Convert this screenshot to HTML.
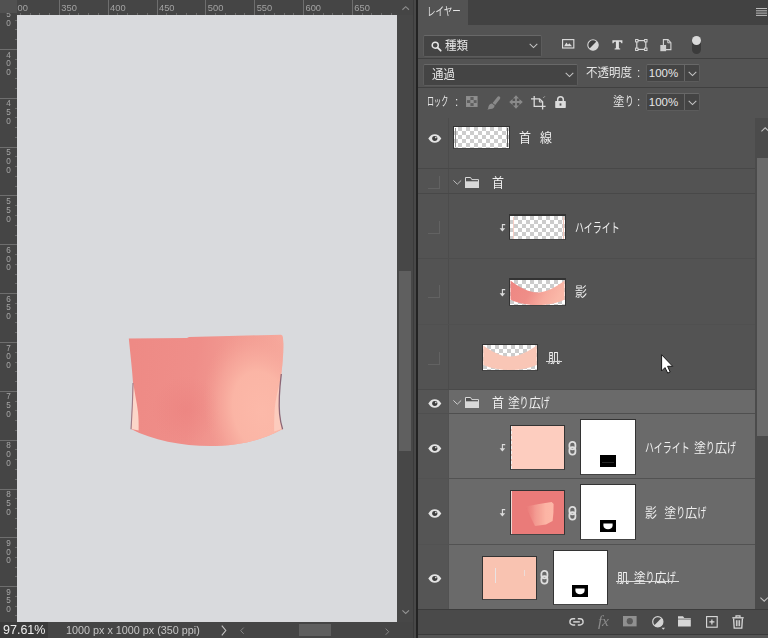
<!DOCTYPE html>
<html lang="ja">
<head>
<meta charset="utf-8">
<title>Photoshop レイヤー</title>
<style>
html,body{margin:0;padding:0;}
body{width:768px;height:638px;overflow:hidden;position:relative;background:#454545;
  font-family:"Liberation Sans","Noto Sans CJK JP",sans-serif;color:#e0e0e0;}
.abs{position:absolute;}
svg{position:absolute;overflow:visible;}
/* ---------- document window ---------- */
#doc{position:absolute;left:0;top:0;width:413px;height:638px;background:#454545;overflow:hidden;}
#canvas{position:absolute;left:17px;top:15px;width:380px;height:607px;background:#d9dadd;}
#corner{position:absolute;left:0;top:0;width:17px;height:13px;background:#515151;}
.hl{position:absolute;top:2.6px;font-size:9.3px;line-height:11px;color:#a2a2a2;white-space:nowrap;}
.vl{position:absolute;left:5px;width:7px;text-align:center;font-size:9.3px;line-height:8.8px;color:#a6a6a6;transform:scaleX(.88);}
.ht{position:absolute;top:0;width:1px;height:15px;background:#6e6e6e;}
.vt{position:absolute;left:0;height:1px;width:17px;background:#6e6e6e;}
.hm{position:absolute;top:13px;width:1px;height:2px;background:#6c6c6c;}
.vm{position:absolute;left:15px;height:1px;width:2px;background:#6c6c6c;}
#rulers,#zoomt,#dims,.gs{will-change:transform;}
#vscroll{position:absolute;left:397px;top:15px;width:16px;height:607px;background:#474747;}
#vthumb{position:absolute;left:399px;top:271px;width:12px;height:180px;background:#5f5f5f;}
#status{position:absolute;left:0;top:622px;width:413px;height:16px;background:#454545;}
#zoomf{position:absolute;left:0;top:0;width:48px;height:16px;background:#3a3a3a;}
#zoomt{position:absolute;left:3px;top:1px;font-size:12.5px;line-height:15px;color:#ececec;}
#dims{position:absolute;left:66px;top:1px;font-size:10.8px;line-height:15px;color:#c6c6c6;white-space:nowrap;}
#hthumb{position:absolute;left:299px;top:2px;width:32px;height:12px;background:#5f5f5f;}
#divider{position:absolute;left:413px;top:0;width:5px;height:638px;background:linear-gradient(90deg,#3b3b3b 0 1.2px,#484848 1.2px 2.9px,#232323 2.9px 5px);}
/* ---------- layers panel ---------- */
#panel{position:absolute;left:418px;top:0;width:350px;height:638px;background:#535353;overflow:hidden;}
/* NOTE: coordinates inside #panel are page coords minus 418 in x */
#tabbar{position:absolute;left:50px;top:0;width:300px;height:25px;background:#424242;}
.jp{position:absolute;white-space:nowrap;font-size:12.5px;line-height:16px;color:#e6e6e6;transform:scaleX(.92);transform-origin:0 0;}
.k{display:inline-block;transform-origin:0 50%;transform:scaleX(var(--s,.75));margin-right:calc(var(--n) * 1em * (var(--s,.75) - 1));}
.ln{font-size:13px;color:#f0f0f0;}
.num{font-size:11.5px;transform:none;}
.sp{display:inline-block;height:1px;}
.hsep{position:absolute;left:0;width:350px;height:1px;background:#404040;}
.row{position:absolute;left:0;width:337px;}
.sel{background:#6a6a6a;}
.sep{position:absolute;left:0;width:337px;height:1px;background:#484848;}
.eyecol{position:absolute;left:0;width:31px;}
.cb{position:absolute;left:10px;width:11px;height:12px;border-right:1px solid #626262;border-bottom:1px solid #626262;}
.thumb{position:absolute;box-sizing:border-box;border:1px solid #333;border-bottom-color:#444;overflow:hidden;}
.chk{background-color:#fff;background-image:linear-gradient(45deg,#ccc 25%,transparent 25%,transparent 75%,#ccc 75%),linear-gradient(45deg,#ccc 25%,transparent 25%,transparent 75%,#ccc 75%);background-size:8px 8px;background-position:0 0,4px 4px;}
.ddbox{position:absolute;box-sizing:border-box;background:#444;border:1px solid #5c5c5c;border-top-color:#686868;border-radius:2px;}
</style>
</head>
<body>
<div id="doc">
  <div id="canvas"></div>
  <svg id="art" style="left:0;top:0" width="413" height="638" viewBox="0 0 413 638">
    <defs>
      <linearGradient id="gskin" gradientUnits="userSpaceOnUse" x1="130" y1="360" x2="285" y2="380">
        <stop offset="0" stop-color="#ee8a85"/>
        <stop offset="0.42" stop-color="#ef8e89"/>
        <stop offset="0.68" stop-color="#f29b92"/>
        <stop offset="1" stop-color="#f7ab9e"/>
      </linearGradient>
      <radialGradient id="glight" gradientUnits="userSpaceOnUse" cx="262" cy="412" r="66" gradientTransform="rotate(-14 262 412) translate(262 412) scale(0.86 1.25) translate(-262 -412)">
        <stop offset="0" stop-color="#fcb9a9" stop-opacity="1"/>
        <stop offset="0.5" stop-color="#fbb6a6" stop-opacity=".95"/>
        <stop offset="0.74" stop-color="#f8ab9e" stop-opacity=".6"/>
        <stop offset="1" stop-color="#f49f94" stop-opacity="0"/>
      </radialGradient>
      <radialGradient id="gdark" gradientUnits="userSpaceOnUse" cx="186" cy="410" r="34">
        <stop offset="0" stop-color="#ea7c7a" stop-opacity="0.42"/>
        <stop offset="1" stop-color="#ea7c7a" stop-opacity="0"/>
      </radialGradient>
      <filter id="soft" x="-5%" y="-5%" width="110%" height="110%"><feGaussianBlur stdDeviation="0.5"/></filter>
    </defs>
    <g filter="url(#soft)">
    <path d="M128.8 338.4L187 338L189 337L281 334.8Q282.7 335 282.9 337L283.5 344C283.4 355 282.4 366 281.3 374C279.6 388 278.6 402 279.6 414C280.2 420 281.2 425 282.6 429C262 441 236 446 210 446C182 446 152 440 131 429C131.6 418 132.4 400 133 383C132.4 372 130.5 355 128.8 338.4Z" fill="url(#gskin)"/>
    <path d="M128.8 338.4L187 338L189 337L281 334.8Q282.7 335 282.9 337L283.5 344C283.4 355 282.4 366 281.3 374C279.6 388 278.6 402 279.6 414C280.2 420 281.2 425 282.6 429C262 441 236 446 210 446C182 446 152 440 131 429C131.6 418 132.4 400 133 383C132.4 372 130.5 355 128.8 338.4Z" fill="url(#gdark)"/>
    <path d="M128.8 338.4L187 338L189 337L281 334.8Q282.7 335 282.9 337L283.5 344C283.4 355 282.4 366 281.3 374C279.6 388 278.6 402 279.6 414C280.2 420 281.2 425 282.6 429C262 441 236 446 210 446C182 446 152 440 131 429C131.6 418 132.4 400 133 383C132.4 372 130.5 355 128.8 338.4Z" fill="url(#glight)"/>
    <!-- left light sliver -->
    <path d="M133.3 383C134.6 393 137 403 138 412C138.6 418 138.8 424 138.6 430.5L131.3 429C132 414 132.8 398 133.3 383Z" fill="#fcd6c9"/>
    <!-- right light sliver -->
    <path d="M280.4 380C278 390 275.2 400 274.6 410C274.2 418 274 425 274.2 431.5L282.4 428.8C280.6 422 279.6 416 279.4 410C279 400 279.6 390 280.4 380Z" fill="#fccbbd"/>
    <!-- dark edge lines -->
    <path d="M133 383C132.8 396 132 414 131 429.3" stroke="#a07c88" stroke-width="1.1" fill="none"/>
    <path d="M281.3 374C279.6 388 278.6 402 279.6 414C280.2 420 281.2 425 282.6 429.2" stroke="#8c6676" stroke-width="1.3" fill="none"/>
    </g>
  </svg>
  <div id="rulers">
<div class="hl" style="left:17.6px">00</div>
<div class="ht" style="left:58.8px"></div>
<div class="hl" style="left:61.3px">350</div>
<div class="ht" style="left:107.6px"></div>
<div class="hl" style="left:110.1px">400</div>
<div class="ht" style="left:156.5px"></div>
<div class="hl" style="left:159.0px">450</div>
<div class="ht" style="left:205.3px"></div>
<div class="hl" style="left:207.8px">500</div>
<div class="ht" style="left:254.2px"></div>
<div class="hl" style="left:256.7px">550</div>
<div class="ht" style="left:303.0px"></div>
<div class="hl" style="left:305.5px">600</div>
<div class="ht" style="left:351.8px"></div>
<div class="hl" style="left:354.3px">650</div>
<div class="hm" style="left:19.7px"></div>
<div class="hm" style="left:29.5px"></div>
<div class="hm" style="left:39.3px"></div>
<div class="hm" style="left:49.0px"></div>
<div class="hm" style="left:68.6px"></div>
<div class="hm" style="left:78.3px"></div>
<div class="hm" style="left:88.1px"></div>
<div class="hm" style="left:97.9px"></div>
<div class="hm" style="left:117.4px"></div>
<div class="hm" style="left:127.2px"></div>
<div class="hm" style="left:136.9px"></div>
<div class="hm" style="left:146.7px"></div>
<div class="hm" style="left:166.2px"></div>
<div class="hm" style="left:176.0px"></div>
<div class="hm" style="left:185.8px"></div>
<div class="hm" style="left:195.6px"></div>
<div class="hm" style="left:215.1px"></div>
<div class="hm" style="left:224.9px"></div>
<div class="hm" style="left:234.6px"></div>
<div class="hm" style="left:244.4px"></div>
<div class="hm" style="left:263.9px"></div>
<div class="hm" style="left:273.7px"></div>
<div class="hm" style="left:283.5px"></div>
<div class="hm" style="left:293.2px"></div>
<div class="hm" style="left:312.8px"></div>
<div class="hm" style="left:322.5px"></div>
<div class="hm" style="left:332.3px"></div>
<div class="hm" style="left:342.1px"></div>
<div class="hm" style="left:361.6px"></div>
<div class="hm" style="left:371.4px"></div>
<div class="hm" style="left:381.1px"></div>
<div class="hm" style="left:390.9px"></div>
<div class="vl" style="top:1.7px">3<br>5<br>0</div>
<div class="vt" style="top:48.9px"></div>
<div class="vl" style="top:50.5px">4<br>0<br>0</div>
<div class="vt" style="top:97.7px"></div>
<div class="vl" style="top:99.3px">4<br>5<br>0</div>
<div class="vt" style="top:146.6px"></div>
<div class="vl" style="top:148.2px">5<br>0<br>0</div>
<div class="vt" style="top:195.4px"></div>
<div class="vl" style="top:197.0px">5<br>5<br>0</div>
<div class="vt" style="top:244.3px"></div>
<div class="vl" style="top:245.9px">6<br>0<br>0</div>
<div class="vt" style="top:293.1px"></div>
<div class="vl" style="top:294.7px">6<br>5<br>0</div>
<div class="vt" style="top:341.9px"></div>
<div class="vl" style="top:343.5px">7<br>0<br>0</div>
<div class="vt" style="top:390.8px"></div>
<div class="vl" style="top:392.4px">7<br>5<br>0</div>
<div class="vt" style="top:439.6px"></div>
<div class="vl" style="top:441.2px">8<br>0<br>0</div>
<div class="vt" style="top:488.5px"></div>
<div class="vl" style="top:490.1px">8<br>5<br>0</div>
<div class="vt" style="top:537.3px"></div>
<div class="vl" style="top:538.9px">9<br>0<br>0</div>
<div class="vt" style="top:586.1px"></div>
<div class="vl" style="top:587.7px">9<br>5<br>0</div>
<div class="vm" style="top:19.6px"></div>
<div class="vm" style="top:29.4px"></div>
<div class="vm" style="top:39.1px"></div>
<div class="vm" style="top:58.7px"></div>
<div class="vm" style="top:68.4px"></div>
<div class="vm" style="top:78.2px"></div>
<div class="vm" style="top:88.0px"></div>
<div class="vm" style="top:107.5px"></div>
<div class="vm" style="top:117.3px"></div>
<div class="vm" style="top:127.0px"></div>
<div class="vm" style="top:136.8px"></div>
<div class="vm" style="top:156.3px"></div>
<div class="vm" style="top:166.1px"></div>
<div class="vm" style="top:175.9px"></div>
<div class="vm" style="top:185.7px"></div>
<div class="vm" style="top:205.2px"></div>
<div class="vm" style="top:215.0px"></div>
<div class="vm" style="top:224.7px"></div>
<div class="vm" style="top:234.5px"></div>
<div class="vm" style="top:254.0px"></div>
<div class="vm" style="top:263.8px"></div>
<div class="vm" style="top:273.6px"></div>
<div class="vm" style="top:283.3px"></div>
<div class="vm" style="top:302.9px"></div>
<div class="vm" style="top:312.6px"></div>
<div class="vm" style="top:322.4px"></div>
<div class="vm" style="top:332.2px"></div>
<div class="vm" style="top:351.7px"></div>
<div class="vm" style="top:361.5px"></div>
<div class="vm" style="top:371.2px"></div>
<div class="vm" style="top:381.0px"></div>
<div class="vm" style="top:400.5px"></div>
<div class="vm" style="top:410.3px"></div>
<div class="vm" style="top:420.1px"></div>
<div class="vm" style="top:429.9px"></div>
<div class="vm" style="top:449.4px"></div>
<div class="vm" style="top:459.2px"></div>
<div class="vm" style="top:468.9px"></div>
<div class="vm" style="top:478.7px"></div>
<div class="vm" style="top:498.2px"></div>
<div class="vm" style="top:508.0px"></div>
<div class="vm" style="top:517.8px"></div>
<div class="vm" style="top:527.5px"></div>
<div class="vm" style="top:547.1px"></div>
<div class="vm" style="top:556.8px"></div>
<div class="vm" style="top:566.6px"></div>
<div class="vm" style="top:576.4px"></div>
<div class="vm" style="top:595.9px"></div>
<div class="vm" style="top:605.7px"></div>
<div class="vm" style="top:615.4px"></div>
  </div>
  <div id="corner"></div>
  <div id="vscroll"></div>
  <div id="vthumb"></div>
  <div id="status">
    <div id="zoomf"></div>
    <div id="zoomt">97.61%</div>
    <div id="dims">1000 px x 1000 px (350 ppi)</div>
    <div id="hthumb"></div>
  </div>
  <svg style="left:402px;top:6.3px" width="7.4" height="4.2" viewBox="0 0 9 5"><path d="M.5 4.5L4.5 .8L8.5 4.5" fill="none" stroke="#8e8e8e" stroke-width="1.3"/></svg>
  <svg style="left:402.3px;top:610px" width="7.4" height="4.2" viewBox="0 0 9 5"><path d="M.5 .5L4.5 4.2L8.5 .5" fill="none" stroke="#959595" stroke-width="1.3"/></svg>
  <svg style="left:221px;top:625px" width="6" height="11" viewBox="0 0 6 11"><path d="M.8 .6L4.8 5.5L.8 10.4" fill="none" stroke="#c4c4c4" stroke-width="1.1"/></svg>
  <svg style="left:240px;top:627.3px" width="4.4" height="7.4" viewBox="0 0 5 8"><path d="M4.2 .5L.8 4L4.2 7.5" fill="none" stroke="#8e8e8e" stroke-width="1"/></svg>
  <svg style="left:385px;top:627.5px" width="4.4" height="7.4" viewBox="0 0 5 8"><path d="M.8 .5L4.2 4L.8 7.5" fill="none" stroke="#8e8e8e" stroke-width="1"/></svg>
</div>
<div id="divider"></div>
<div id="panel">
  <!-- tab strip -->
  <div id="tabbar"></div>
  <div class="jp" id="tabname" style="left:9.3px;top:3.5px;font-size:12px;"><span class="k" style="--n:4;--s:.77">レイヤー</span></div>
  <svg style="left:338px;top:8px" width="11" height="8" viewBox="0 0 11 8"><path d="M0 .5H11M0 2.8H11M0 5.1H11M0 7.4H11" stroke="#bdbdbd" stroke-width="1"/></svg>

  <!-- filter row -->
  <div class="ddbox" style="left:5px;top:35px;width:119px;height:22px;"></div>
  <svg style="left:12.6px;top:40.6px" width="11" height="11" viewBox="0 0 12 12"><circle cx="4.6" cy="4.6" r="3.3" fill="none" stroke="#e6e6e6" stroke-width="1.6"/><path d="M7.2 7.2L10.6 10.6" stroke="#e6e6e6" stroke-width="1.9" stroke-linecap="round"/></svg>
  <div class="jp" style="left:27px;top:38px;">種類</div>
  <svg style="left:111px;top:43px" width="9" height="6" viewBox="0 0 9 6"><path d="M.7 .8L4.5 4.6L8.3 .8" fill="none" stroke="#c4c4c4" stroke-width="1.05"/></svg>

  <div class="hsep" style="top:58px"></div>
  <div class="hsep" style="top:87px"></div>
  <!-- blend row -->
  <div class="ddbox" style="left:5px;top:64px;width:155px;height:22px;"></div>
  <div class="jp" style="left:14px;top:67px;">通過</div>
  <svg style="left:147px;top:72px" width="9" height="6" viewBox="0 0 9 6"><path d="M.7 .8L4.5 4.6L8.3 .8" fill="none" stroke="#c4c4c4" stroke-width="1.05"/></svg>
  <div class="jp" style="left:168px;top:65px;">不透明度</div>
  <div class="jp" style="left:219.3px;top:65px;">:</div>
  <div class="ddbox" style="left:228px;top:64px;width:54px;height:18px;"></div>
  <div class="abs" style="left:266px;top:65px;width:1px;height:16px;background:#666;"></div>
  <div class="jp num" style="left:230.8px;top:65.3px;">100%</div>
  <svg style="left:270px;top:71px" width="9" height="6" viewBox="0 0 9 6"><path d="M.7 .8L4.5 4.6L8.3 .8" fill="none" stroke="#c4c4c4" stroke-width="1.05"/></svg>

  <!-- lock row -->
  <div class="jp" style="left:9px;top:94px;font-size:12px;"><span class="k" style="--n:3;--s:.64">ロック</span></div>
  <div class="jp" style="left:36.5px;top:94px;">:</div>
  <div class="jp" style="left:195px;top:94px;">塗<span class="k" style="--n:1">り</span></div>
  <div class="jp" style="left:219.3px;top:94px;">:</div>
  <div class="ddbox" style="left:228px;top:93px;width:54px;height:18px;"></div>
  <div class="abs" style="left:266px;top:94px;width:1px;height:16px;background:#666;"></div>
  <div class="jp num" style="left:230.8px;top:94.3px;">100%</div>
  <svg style="left:270px;top:100px" width="9" height="6" viewBox="0 0 9 6"><path d="M.7 .8L4.5 4.6L8.3 .8" fill="none" stroke="#c4c4c4" stroke-width="1.05"/></svg>
  <!-- filter icons -->
  <svg style="left:143.7px;top:39.2px" width="12.4" height="9.6" viewBox="0 0 13 10"><rect x=".6" y=".6" width="11.8" height="8.8" fill="none" stroke="#dcdcdc" stroke-width="1.2"/><path d="M2.2 7.6L4.6 3.6L6.3 6L7.6 4.4L10.6 7.6Z" fill="#dcdcdc"/></svg>
  <svg style="left:168.5px;top:38.5px" width="12" height="12" viewBox="0 0 12 12"><circle cx="6" cy="6" r="5.2" fill="#3e3e3e" stroke="#d6d6d6" stroke-width="1.1"/><path d="M9.7 2.3A5.2 5.2 0 0 1 2.3 9.7Z" fill="#d6d6d6"/></svg>
  <svg style="left:194px;top:39.5px" width="11" height="10" viewBox="0 0 11 10"><path d="M.4 .3H10.4V3.3H9.4C9.2 2.2 8.6 1.7 7.4 1.7H6.9V7.6C6.9 8.3 7.3 8.6 8.2 8.6V9.6H2.6V8.6C3.5 8.6 3.9 8.3 3.9 7.6V1.7H3.4C2.2 1.7 1.6 2.2 1.4 3.3H.4Z" fill="#dedede"/></svg>
  <svg style="left:216.5px;top:38.5px" width="13" height="12" viewBox="0 0 13 12"><rect x="1.8" y="1.6" width="9" height="8.8" fill="none" stroke="#d8d8d8" stroke-width="1.2"/><g fill="#535353" stroke="#d8d8d8" stroke-width="1"><rect x=".6" y=".5" width="2.4" height="2.4"/><rect x="9.6" y=".5" width="2.4" height="2.4"/><rect x=".6" y="9.1" width="2.4" height="2.4"/><rect x="9.6" y="9.1" width="2.4" height="2.4"/></g></svg>
  <svg style="left:241.5px;top:38.5px" width="12" height="13" viewBox="0 0 12 13"><path d="M3.4 .6H8L10.9 3.6V10.6H3.4Z" fill="none" stroke="#d4d4d4" stroke-width="1.1"/><path d="M7.8 .8V3.8H10.8" fill="none" stroke="#d4d4d4" stroke-width="1"/><rect x=".3" y="6" width="5.8" height="6.2" fill="#cfcfcf"/></svg>
  <!-- filter toggle -->
  <div class="abs" style="left:273.5px;top:36.5px;width:9.5px;height:17.5px;border-radius:5px;background:#3b3b3b;"></div>
  <div class="abs" style="left:273.5px;top:35.5px;width:9.5px;height:9.5px;border-radius:5px;background:#d9d9d9;"></div>
  <!-- lock icons -->
  <svg style="left:48px;top:96px" width="12" height="11" viewBox="0 0 12 11"><rect x=".5" y=".5" width="10.6" height="10" fill="#5e5e5e" stroke="#8c8c8c" stroke-width="1"/><g fill="#8f8f8f"><rect x="1" y="1" width="3.4" height="3.1"/><rect x="7.6" y="1" width="3.4" height="3.1"/><rect x="4.3" y="4" width="3.4" height="3.1"/><rect x="1" y="7" width="3.4" height="3.1"/><rect x="7.6" y="7" width="3.4" height="3.1"/></g></svg>
  <svg style="left:69px;top:95.5px" width="14" height="14" viewBox="0 0 14 14"><path d="M12.4 .5C13.4 1.1 13.5 2.1 12.9 2.9L8.2 9L5.6 7L10.4 .9C10.9 .2 11.7 .1 12.4 .5Z" fill="#8a8a8a"/><path d="M5 7.5L7.6 9.6C7.6 11.6 6 13 3.6 13.1C2.4 13.2 1.3 13.3 .3 13.8C1.5 12.4 1.1 11.3 1.7 9.9C2.3 8.3 3.7 7.4 5 7.5Z" fill="#8a8a8a"/></svg>
  <svg style="left:90.5px;top:95px" width="14" height="14" viewBox="0 0 14 14"><path d="M7 .2L10 3.6H7.9V6.1H10.4V4L13.8 7L10.4 10V7.9H7.9V10.4H10L7 13.8L4 10.4H6.1V7.9H3.6V10L.2 7L3.6 4V6.1H6.1V3.6H4Z" fill="#8a8a8a"/></svg>
  <svg style="left:113px;top:96px" width="15" height="14" viewBox="0 0 15 14"><path d="M3.2 0V10.4H14.6M0 2.8H8.6L11.6 5.8V13.6" fill="none" stroke="#dadada" stroke-width="1.3"/><path d="M8.4 3V6H11.4" fill="none" stroke="#dadada" stroke-width="1"/><path d="M12.6 1.6L13.6 .6" stroke="#dadada" stroke-width="1"/></svg>
  <svg style="left:136.5px;top:96px" width="11" height="12" viewBox="0 0 11 12"><path d="M2.7 5.4V3.6C2.7 1.9 3.9 .8 5.5 .8C7.1 .8 8.3 1.9 8.3 3.6V5.4" fill="none" stroke="#dcdcdc" stroke-width="1.5"/><rect x=".2" y="5" width="10.6" height="6.9" rx=".6" fill="#dcdcdc"/><rect x="4.6" y="7.4" width="1.8" height="2.2" fill="#535353"/></svg>

  <svg width="0" height="0" style="left:0;top:0"><defs>
    <g id="eyeg"><path d="M.3 5C2 2 4.3 .4 7 .4C9.7 .4 12 2 13.7 5C12 8 9.7 9.6 7 9.6C4.3 9.6 2 8 .3 5Z" fill="#e4e4e4"/><circle cx="7" cy="4.9" r="2.7" fill="#3c3c3c"/><circle cx="8" cy="3.9" r=".9" fill="#d8d8d8"/></g>
    <g id="folderg"><path d="M.5 10.5V.5H5.6L6.8 2.6H13.5V10.5Z" fill="#4f4f4f" stroke="#d9d9d9" stroke-width="1"/><rect x="0" y="4.3" width="14" height="6.7" fill="#d9d9d9"/></g>
    <g id="clipg"><path d="M6.2 .6H3.4V6.6" fill="none" stroke="#dcdcdc" stroke-width="1.1"/><path d="M.6 4.2H6.2L3.4 7.6Z" fill="#dcdcdc"/></g>
    <g id="chaing" fill="none" stroke="#dedede" stroke-width="1.7"><rect x="1.1" y=".9" width="5.8" height="7.2" rx="2.8"/><rect x="1.1" y="5.9" width="5.8" height="7.2" rx="2.8"/></g>
  </defs></svg>
  <!-- ===== layer list (panel x = page x - 418) ===== -->
  <div id="list" class="abs" style="left:0;top:118px;width:337px;height:491px;">
    <!-- selected block background -->
    <div class="abs sel" style="left:31px;top:272px;width:306px;height:219px;"></div>
    <div class="abs" style="left:0;top:272px;width:31px;height:219px;background:#555;"></div>
    <!-- eye column divider -->
    <div class="abs" style="left:30px;top:0;width:1px;height:272px;background:#4c4c4c;"></div>
    <div class="abs" style="left:30px;top:272px;width:1px;height:219px;background:#525252;"></div>
    <!-- row separators (list coords = page y - 118) -->
    <div class="sep" style="top:50px"></div>
    <div class="sep" style="top:75px"></div>
    <div class="sep" style="top:140px;background:#4d4d4d"></div>
    <div class="sep" style="top:206px;background:#505050"></div>
    <div class="sep" style="top:271px;background:#4a4a4a"></div>
    <div class="sep" style="top:295px;background:#4f4f4f"></div>
    <div class="sep" style="top:360px;background:#525252"></div>
    <div class="sep" style="top:426px;background:#525252"></div>
  </div>

  <!-- row 0 : 首 線 -->
  <svg class="eye" style="left:10px;top:133.5px" width="13.6" height="9.2" viewBox="0 0 14 10" preserveAspectRatio="none"><use href="#eyeg"/></svg>
  <div class="thumb chk" style="left:35px;top:126px;width:57px;height:23px;"></div>
  <div class="abs" style="left:37px;top:128px;width:1px;height:19px;background:#8a8a8a;"></div>
  <div class="abs" style="left:89px;top:128px;width:1px;height:19px;background:#5a5a5a;"></div>
  <div class="jp ln" style="left:101.3px;top:129.5px;">首</div>
  <div class="jp ln" style="left:122.3px;top:129.5px;">線</div>

  <!-- row 1 : group 首 -->
  <div class="cb" style="top:176px;"></div>
  <svg style="left:35px;top:180px" width="9" height="5" viewBox="0 0 9 5"><path d="M.4 .4L4.3 4.2L8.2 .4" fill="none" stroke="#bcbcbc" stroke-width="1"/></svg>
  <svg style="left:47px;top:177px" width="14" height="11" viewBox="0 0 14 11"><use href="#folderg"/></svg>
  <div class="jp ln" style="left:73.5px;top:175px;">首</div>

  <!-- row 2 : ハイライト -->
  <div class="cb" style="top:221px;"></div>
  <svg style="left:81.3px;top:224px" width="7" height="8" viewBox="0 0 7 8"><use href="#clipg"/></svg>
  <div class="thumb chk" style="left:91px;top:214px;width:57px;height:26px;border-top-width:2px;"></div>
  <div class="abs" style="left:94.5px;top:217px;width:1px;height:22px;background:#f6cfc6;"></div>
  <div class="abs" style="left:145px;top:217px;width:1px;height:22px;background:#f3c5bb;"></div>
  <div class="jp ln" style="left:157.4px;top:219.5px;"><span class="k" style="--n:5">ハイライト</span></div>

  <!-- row 3 : 影 -->
  <div class="cb" style="top:285px;"></div>
  <svg style="left:81.3px;top:289px" width="7" height="8" viewBox="0 0 7 8"><use href="#clipg"/></svg>
  <div class="thumb chk" style="left:91px;top:278px;width:57px;height:28px;border-top-width:2px;">
    <svg style="left:0;top:0" width="55" height="25" viewBox="0 0 55 25"><defs><linearGradient id="gk" x1="0" y1="0" x2="1" y2=".25"><stop offset="0" stop-color="#ee8682"/><stop offset=".45" stop-color="#ef8e88"/><stop offset=".75" stop-color="#f7ab9e"/><stop offset="1" stop-color="#fab8a8"/></linearGradient></defs><path d="M.5 .5C9 7 19 12.6 27.5 12.6C36 12.6 46 7 54.5 .5V19.5C47 23.5 38 25 27.5 25C17 25 8 23.5 .5 19.5Z" fill="url(#gk)"/></svg>
  </div>
  <div class="jp ln" style="left:157.4px;top:284px;">影</div>

  <!-- row 4 : 肌 -->
  <div class="cb" style="top:351.5px;"></div>
  <div class="thumb chk" style="left:64px;top:344px;width:56px;height:27px;">
    <svg style="left:0;top:0" width="54" height="25" viewBox="0 0 54 25"><path d="M.3 .5C9 6.5 18 11.6 27 11.6C36 11.6 45 6.5 53.7 .5V20C46 23.5 37 25 27 25C17 25 8 23.5 .3 20Z" fill="#f9c6b6"/></svg>
  </div>
  <div class="jp ln" style="left:129.6px;top:349.5px;">肌</div>
  <div class="abs" style="left:128px;top:361px;width:16px;height:1px;background:#d8d8d8;"></div>

  <!-- row 5 : group 首 塗り広げ (selected) -->
  <svg class="eye" style="left:10px;top:398.5px" width="13.6" height="9.2" viewBox="0 0 14 10" preserveAspectRatio="none"><use href="#eyeg"/></svg>
  <svg style="left:35px;top:400px" width="9" height="5" viewBox="0 0 9 5"><path d="M.4 .4L4.3 4.2L8.2 .4" fill="none" stroke="#cfcfcf" stroke-width="1"/></svg>
  <svg style="left:47px;top:397px" width="14" height="11" viewBox="0 0 14 11"><use href="#folderg"/></svg>
  <div class="jp ln" style="left:73.5px;top:394.5px;">首<span class="sp" style="width:4.35px"></span>塗<span class="k" style="--n:1">り</span>広<span class="k" style="--n:1">げ</span></div>

  <!-- row 6 : ハイライト 塗り広げ -->
  <svg class="eye" style="left:10px;top:443.5px" width="13.6" height="9.2" viewBox="0 0 14 10" preserveAspectRatio="none"><use href="#eyeg"/></svg>
  <svg style="left:81.3px;top:444px" width="7" height="8" viewBox="0 0 7 8"><use href="#clipg"/></svg>
  <div class="thumb" style="left:91.5px;top:425px;width:55px;height:45px;background:#fdcdbf;"></div>
  <div class="abs" style="left:92.5px;top:426px;width:1px;height:43px;background:repeating-linear-gradient(#f2f2f2 0 3px,#e9c4b9 3px 5px);"></div>
  <svg style="left:149.8px;top:440.5px" width="8.8" height="14.6" viewBox="0 0 8 14"><use href="#chaing"/></svg>
  <div class="thumb" style="left:162px;top:419px;width:56px;height:56px;background:#fff;"></div>
  <div class="abs" style="left:182px;top:455px;width:16px;height:12px;background:#000;"></div>
  <div class="abs" style="left:184px;top:462px;width:12px;height:1px;background:#262626;"></div>
  <div class="jp ln" style="left:227.2px;top:439.5px;"><span class="k" style="--n:5">ハイライト</span><span class="sp" style="width:4.7px"></span>塗<span class="k" style="--n:1">り</span>広<span class="k" style="--n:1">げ</span></div>

  <!-- row 7 : 影 塗り広げ -->
  <svg class="eye" style="left:10px;top:508.5px" width="13.6" height="9.2" viewBox="0 0 14 10" preserveAspectRatio="none"><use href="#eyeg"/></svg>
  <svg style="left:81.3px;top:509px" width="7" height="8" viewBox="0 0 7 8"><use href="#clipg"/></svg>
  <div class="thumb" style="left:91.5px;top:490px;width:55px;height:45px;background:#ea7b79;">
    <svg style="left:0;top:0" width="53" height="43" viewBox="0 0 53 43"><defs><linearGradient id="gb" x1="0" y1="0" x2="1" y2="0"><stop offset="0" stop-color="#f0928a" stop-opacity="0"/><stop offset=".35" stop-color="#f6a599" stop-opacity=".75"/><stop offset=".7" stop-color="#fcb4a4"/><stop offset="1" stop-color="#fdb8a8"/></linearGradient><filter id="bl" x="-20%" y="-20%" width="140%" height="140%"><feGaussianBlur stdDeviation="0.65"/></filter></defs><path d="M15 15.5L28 13L40.6 11L42.6 13L42.4 22L41.6 30L35 33.4L24 35L20 27Z" fill="url(#gb)" filter="url(#bl)"/></svg>
  </div>
  <div class="abs" style="left:92.5px;top:491px;width:1px;height:43px;background:#f0d6d2;"></div>
  <svg style="left:149.8px;top:505.5px" width="8.8" height="14.6" viewBox="0 0 8 14"><use href="#chaing"/></svg>
  <div class="thumb" style="left:162px;top:484px;width:56px;height:56px;background:#fff;"></div>
  <div class="abs" style="left:182px;top:520px;width:16px;height:12px;background:#000;"></div>
  <svg style="left:185px;top:523px" width="10" height="7" viewBox="0 0 10 7"><path d="M.4 .5H9.6V2.8C9.4 5 7.6 6.2 5 6.2C2.4 6.2 .6 5 .4 2.8Z" fill="#fff"/></svg>
  <div class="jp ln" style="left:227.2px;top:504.5px;">影<span class="sp" style="width:7.9px"></span>塗<span class="k" style="--n:1">り</span>広<span class="k" style="--n:1">げ</span></div>

  <!-- row 8 : 肌 塗り広げ -->
  <svg class="eye" style="left:10px;top:573.5px" width="13.6" height="9.2" viewBox="0 0 14 10" preserveAspectRatio="none"><use href="#eyeg"/></svg>
  <div class="thumb" style="left:63.7px;top:555.5px;width:55px;height:44.5px;background:#f9c3b1;"></div>
  <div class="abs" style="left:76.5px;top:568px;width:1px;height:15px;background:#e9e3e3;"></div>
  <div class="abs" style="left:106px;top:570px;width:1px;height:6px;background:#ecdcd8;"></div>
  <svg style="left:121.8px;top:569.8px" width="8.8" height="14.6" viewBox="0 0 8 14"><use href="#chaing"/></svg>
  <div class="thumb" style="left:134.5px;top:549.5px;width:55px;height:55.5px;background:#fff;"></div>
  <div class="abs" style="left:154px;top:585px;width:16px;height:12px;background:#000;"></div>
  <svg style="left:157px;top:588px" width="10" height="7" viewBox="0 0 10 7"><path d="M.4 .5H9.6V2.8C9.4 5 7.6 6.2 5 6.2C2.4 6.2 .6 5 .4 2.8Z" fill="#fff"/></svg>
  <div class="jp ln" id="lastname" style="left:199.2px;top:570px;">肌<span class="sp" style="width:5.1px"></span>塗<span class="k" style="--n:1">り</span>広<span class="k" style="--n:1">げ</span></div>
  <div class="abs" style="left:198px;top:581px;width:63px;height:1px;background:#dedede;"></div>

  <!-- list scrollbar -->
  <div class="abs" style="left:337px;top:118px;width:13px;height:491px;background:#4b4b4b;"></div>
  <div class="abs" style="left:339px;top:158px;width:11px;height:278px;background:#6a6a6a;"></div>
  <svg style="left:342.5px;top:127px" width="8" height="5" viewBox="0 0 8 5"><path d="M.4 4.4L4.2 .8L8 4.4" fill="none" stroke="#bdbdbd" stroke-width="1.1"/></svg>
  <svg style="left:341.5px;top:596.5px" width="8" height="5" viewBox="0 0 8 5"><path d="M.4 .6L4.2 4.2L8 .6" fill="none" stroke="#bdbdbd" stroke-width="1.1"/></svg>

  <!-- mouse cursor -->
  <svg style="left:243px;top:353.5px" width="13" height="20" viewBox="0 0 13 20"><path d="M.6 .7V17L4 13.6L6.7 19.1L9.2 18L6.6 12.3H11.7Z" fill="#fff" stroke="#1a1a1a" stroke-width="1" stroke-linejoin="round"/></svg>

  <!-- bottom toolbar (panel x = page x - 418) -->
  <div class="abs" style="left:0;top:609px;width:350px;height:25px;background:#4a4a4a;"></div>
  <div class="abs" style="left:0;top:609px;width:350px;height:1px;background:#3c3c3c;"></div>
  <div class="abs" style="left:0;top:634px;width:350px;height:1px;background:#3a3a3a;"></div>
  <div class="abs" style="left:0;top:635px;width:350px;height:3px;background:#555;"></div>
  <svg style="left:150.7px;top:617.6px" width="15" height="8" viewBox="0 0 15 8"><g fill="none" stroke="#d4d4d4" stroke-width="1.4"><path d="M6.2 .8H4A3.1 3.1 0 0 0 4 7H6.2"/><path d="M8.8 .8H11A3.1 3.1 0 0 1 11 7H8.8"/></g><path d="M4.2 3.9H10.8" stroke="#d4d4d4" stroke-width="1.5"/></svg>
  <div class="abs gs" style="left:179.5px;top:611.5px;font-family:'Liberation Serif',serif;font-style:italic;font-size:15.5px;line-height:18px;color:#8c8c8c;letter-spacing:-.3px;">fx</div>
  <svg style="left:205px;top:616px" width="14" height="11" viewBox="0 0 14 11"><rect x="0" y="0" width="13.6" height="10.4" fill="#909090"/><circle cx="6.8" cy="5.2" r="3.1" fill="#5a5a5a"/></svg>
  <svg style="left:234px;top:615.5px" width="14" height="15" viewBox="0 0 14 15"><circle cx="5.8" cy="5.8" r="5.1" fill="#4a4a4a" stroke="#d4d4d4" stroke-width="1.2"/><path d="M9.5 2.1A5.2 5.2 0 0 1 2.1 9.5Z" fill="#d4d4d4"/><path d="M9.6 11.8H13L11.3 13.8Z" fill="#d4d4d4"/></svg>
  <svg style="left:260px;top:616px" width="13" height="11" viewBox="0 0 13 11"><path d="M0 10.4V.2H5L6.3 2H12.8V10.4Z" fill="#d6d6d6"/><path d="M0 3.1H12.8" stroke="#4a4a4a" stroke-width=".7"/></svg>
  <svg style="left:288px;top:615.5px" width="12" height="12" viewBox="0 0 12 12"><rect x=".6" y=".6" width="10.6" height="10.6" fill="none" stroke="#dcdcdc" stroke-width="1.1"/><path d="M5.9 3.4V8.4M3.4 5.9H8.4" stroke="#dcdcdc" stroke-width="1.2"/></svg>
  <svg style="left:314px;top:615px" width="12" height="14" viewBox="0 0 12 14"><path d="M.3 2.8H11.7" stroke="#d8d8d8" stroke-width="1.3"/><path d="M4 2.6V.8H8V2.6" fill="none" stroke="#d8d8d8" stroke-width="1.2"/><path d="M1.6 3.4L2.2 13.2H9.8L10.4 3.4" fill="none" stroke="#d8d8d8" stroke-width="1.3"/><path d="M4.4 5.2V11.2M6 5.2V11.2M7.6 5.2V11.2" stroke="#d8d8d8" stroke-width="1"/></svg>

</div>
</body>
</html>
